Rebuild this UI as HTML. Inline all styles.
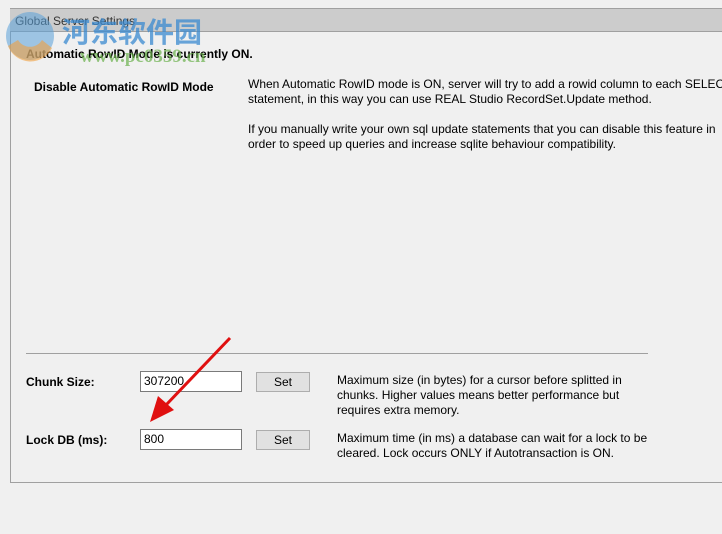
<!DOCTYPE html>
<html><head><meta charset="utf-8"><style>
body{margin:0;width:722px;height:534px;background:#f0f0f0;font-family:"Liberation Sans",sans-serif;font-size:12px;color:#000;position:relative;overflow:hidden}
.a{position:absolute;white-space:nowrap}
.panel{position:absolute;left:10px;top:8px;width:720px;height:475px;border:1px solid #a0a0a0;border-right:none;box-sizing:border-box}
.title{position:absolute;left:10px;top:8px;width:712px;height:24px;background:#cccccc;border-top:1px solid #a0a0a0;border-bottom:1px solid #a0a0a0;box-sizing:border-box}
.b{font-weight:bold}
.in{position:absolute;width:102px;height:21px;background:#fff;border:1px solid #7a7a7a;box-sizing:border-box;padding:2px 3px;font-size:12px}
.btn{position:absolute;width:54px;height:20px;background:#e1e1e1;border:1px solid #adadad;box-sizing:border-box;text-align:center;line-height:18px;font-size:12px}
.p{line-height:15px}
</style></head><body>
<div class="panel"></div>
<div class="title"></div>
<div class="a" style="left:15px;top:14px;color:#333">Global Server Settings</div>
<div class="a b" style="left:26px;top:47px">Automatic RowID Mode is currently ON.</div>
<div class="a b" style="left:34px;top:80px">Disable Automatic RowID Mode</div>
<div class="a p" style="left:248px;top:77px">When Automatic RowID mode is ON, server will try to add a rowid column to each SELECT<br>statement, in this way you can use REAL Studio RecordSet.Update method.<br><br>If you manually write your own sql update statements that you can disable this feature in<br>order to speed up queries and increase sqlite behaviour compatibility.</div>
<div style="position:absolute;left:26px;top:353px;width:622px;height:1px;background:#a0a0a0"></div>
<div class="a b" style="left:26px;top:375px">Chunk Size:</div>
<div class="in" style="left:140px;top:371px">307200</div>
<div class="btn" style="left:256px;top:372px">Set</div>
<div class="a p" style="left:337px;top:373px">Maximum size (in bytes) for a cursor before splitted in<br>chunks. Higher values means better performance but<br>requires extra memory.</div>
<div class="a b" style="left:26px;top:433px">Lock DB (ms):</div>
<div class="in" style="left:140px;top:429px">800</div>
<div class="btn" style="left:256px;top:430px">Set</div>
<div class="a p" style="left:337px;top:431px">Maximum time (in ms) a database can wait for a lock to be<br>cleared. Lock occurs ONLY if Autotransaction is ON.</div>
<svg style="position:absolute;left:0;top:0" width="722" height="534">
<line x1="230" y1="338" x2="166" y2="405" stroke="#e01010" stroke-width="3"/>
<polygon points="150,422 158,396 174,410" fill="#e01010"/>
<circle cx="30" cy="36" r="24" fill="#5aa0d8" opacity="0.55"/>
<path d="M8 46 A24 24 0 0 0 52 48 L42 40 A14 14 0 0 1 18 40Z" fill="#f0a040" opacity="0.6"/>
<text x="62" y="42" font-family="Noto Sans CJK SC,sans-serif" font-size="28" font-weight="bold" fill="#3a8ad0" opacity="0.75">河东软件园</text>
<text x="80" y="62" font-family="Liberation Serif,serif" font-size="19" font-weight="bold" fill="#6ab04c" opacity="0.7">www.pc0359.cn</text>
</svg>
</body></html>
